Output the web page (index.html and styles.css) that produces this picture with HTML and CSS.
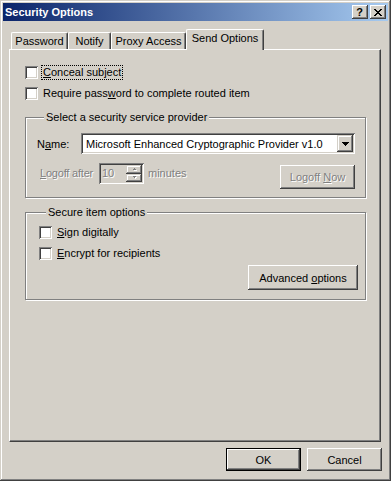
FILE: index.html
```html
<!DOCTYPE html>
<html lang="en">
<head>
  <meta charset="UTF-8" />
  <title>Security Options</title>
  <link rel="stylesheet" href="styles.css">
</head>
<body>
  <div class="window">
    <div class="titlebar">
      <span class="title">Security Options</span>
      <div class="caption-buttons">
        <span class="cap-btn help">?</span>
        <span class="cap-btn close">
          <svg width="8" height="7" viewBox="0 0 8 7" shape-rendering="crispEdges"><path d="M0 0h2v1H0zM6 0h2v1H6zM1 1h2v1H1zM5 1h2v1H5zM2 2h4v1H2zM3 3h2v1H3zM2 4h4v1H2zM1 5h2v1H1zM5 5h2v1H5zM0 6h2v1H0zM6 6h2v1H6z" fill="#000"/></svg>
        </span>
      </div>
    </div>

    <div class="client">
      <div class="tabs">
        <div class="tab tab-password">Password</div>
        <div class="tab tab-notify">Notify</div>
        <div class="tab tab-proxy">Proxy Access</div>
        <div class="tab tab-send active">Send Options</div>
      </div>

      <div class="panel">
        <div class="check">
          <span class="box"></span>
          <span class="check-text focused"><u>C</u>onceal subject</span>
        </div>
        <div class="check check-2">
          <span class="box"></span>
          <span class="check-text">Require pass<u>w</u>ord to complete routed item</span>
        </div>

        <div class="group group-provider">
          <div class="legend">Select a security service provider</div>
          <div class="name-row">
            <span class="name-label">N<u>a</u>me:</span>
            <div class="combo">
              <span class="combo-text">Microsoft Enhanced Cryptographic Provider v1.0</span>
              <span class="combo-btn">
                <svg width="7" height="4" viewBox="0 0 7 4" shape-rendering="crispEdges"><path d="M0 0h7v1H0zM1 1h5v1H1zM2 2h3v1H2zM3 3h1v1H3z" fill="#000"/></svg>
              </span>
            </div>
          </div>
          <div class="logoff-row">
            <span class="logoff-label disabled"><u>L</u>ogoff after</span>
            <div class="spin-edit">
              <span class="spin-value">10</span>
              <div class="spin">
                <span class="spin-btn">
                  <svg width="5" height="3" viewBox="0 0 5 3" shape-rendering="crispEdges"><path d="M2 0h1v1H2zM1 1h3v1H1z" fill="#808080"/></svg>
                </span>
                <span class="spin-btn">
                  <svg width="5" height="3" viewBox="0 0 5 3" shape-rendering="crispEdges"><path d="M1 0h3v1H1zM2 1h1v1H2z" fill="#808080"/></svg>
                </span>
              </div>
            </div>
            <span class="minutes disabled">minutes</span>
            <div class="btn btn-logoff disabled"><span>Logoff <u>N</u>ow</span></div>
          </div>
        </div>

        <div class="group group-secure">
          <div class="legend">Secure item options</div>
          <div class="check check-first">
            <span class="box"></span>
            <span class="check-text"><u>S</u>ign digitally</span>
          </div>
          <div class="check check-2">
            <span class="box"></span>
            <span class="check-text"><u>E</u>ncrypt for recipients</span>
          </div>
          <div class="advanced-row">
            <div class="btn btn-advanced"><span>Advanced <u>o</u>ptions</span></div>
          </div>
        </div>
      </div>

      <div class="buttons">
        <div class="btn btn-dialog default"><span>OK</span></div>
        <div class="btn btn-dialog"><span>Cancel</span></div>
      </div>
    </div>
  </div>
</body>
</html>
```

FILE: styles.css
```css
body {
  margin: 0;
  background: #d4d0c8;
  font-family: "Liberation Sans", Arial, sans-serif;
  font-size: 11px;
  color: #000;
}
u {
  text-decoration: underline;
  text-underline-offset: 1px;
}
.window {
  width: 391px;
  height: 481px;
  box-sizing: border-box;
  padding: 3px;
  background: #d4d0c8;
  box-shadow: inset -1px -1px #404040, inset 1px 1px #d4d0c8, inset -2px -2px #808080, inset 2px 2px #fff;
}
.titlebar {
  height: 18px;
  display: flex;
  align-items: center;
  padding: 0 2px;
  background: linear-gradient(to right, #0a246a, #a6caf0);
}
.title {
  flex: 1;
  color: #fff;
  font-weight: bold;
  font-size: 11px;
  line-height: 18px;
}
.caption-buttons {
  display: flex;
  gap: 2px;
}
.cap-btn {
  width: 16px;
  height: 14px;
  box-sizing: border-box;
  display: flex;
  align-items: center;
  justify-content: center;
  background: #d4d0c8;
  box-shadow: inset -1px -1px #404040, inset 1px 1px #fff, inset -2px -2px #808080;
}
.help {
  font-weight: bold;
  font-size: 11px;
  line-height: 14px;
  padding-right: 1px;
}
.close svg {
  display: block;
}

.client {
  padding: 0 6px;
}
.tabs {
  display: flex;
  align-items: flex-end;
  height: 28px;
  padding-left: 2px;
}
.tab {
  height: 17px;
  box-sizing: border-box;
  border-left: 1px solid #fff;
  border-top: 1px solid #fff;
  border-right: 1px solid #404040;
  border-radius: 2px 2px 0 0;
  box-shadow: inset -1px 0 #808080;
  background: #d4d0c8;
  text-align: center;
  line-height: 16px;
}
.tab-password { width: 57px; }
.tab-notify { width: 43px; }
.tab-proxy { width: 75px; }
.tab-send { width: 78px; }
.tab.active {
  height: 21px;
  margin-bottom: -1px;
  position: relative;
  z-index: 1;
  line-height: 17px;
}

.panel {
  width: 372px;
  height: 393px;
  box-sizing: border-box;
  border: 1px solid;
  border-color: #fff #404040 #404040 #fff;
  box-shadow: inset -1px -1px #808080;
  padding: 16px 0 0 15px;
}
.check {
  display: flex;
  align-items: center;
  height: 13px;
}
.check-2 {
  margin-top: 8px;
}
.box {
  width: 13px;
  height: 13px;
  box-sizing: border-box;
  background: #fff;
  box-shadow: inset 1px 1px #808080, inset -1px -1px #fff, inset 2px 2px #404040, inset -2px -2px #d4d0c8;
}
.check-text {
  margin-left: 4px;
  padding: 0 1px;
  line-height: 13px;
  white-space: nowrap;
}
.focused {
  outline: 1px dotted #000;
}

.group {
  width: 341px;
  box-sizing: border-box;
  border: 1px solid #808080;
  box-shadow: inset 1px 1px #fff, 1px 1px #fff;
}
.legend {
  width: fit-content;
  margin: -7px 0 0 7px;
  padding: 0 2px;
  line-height: 13px;
  background: #d4d0c8;
}
.group-provider {
  margin-top: 17px;
  padding: 0 10px 8px 11px;
}
.name-row {
  display: flex;
  align-items: center;
  margin-top: 9px;
}
.name-label {
  width: 44px;
}
.combo {
  width: 274px;
  height: 21px;
  box-sizing: border-box;
  padding: 2px;
  display: flex;
  align-items: center;
  background: #fff;
  box-shadow: inset 1px 1px #808080, inset -1px -1px #fff, inset 2px 2px #404040, inset -2px -2px #d4d0c8;
}
.combo-text {
  flex: 1;
  padding-left: 3px;
  white-space: nowrap;
}
.combo-btn {
  width: 16px;
  height: 17px;
  box-sizing: border-box;
  display: flex;
  align-items: center;
  justify-content: center;
  background: #d4d0c8;
  box-shadow: inset -1px -1px #404040, inset 1px 1px #d4d0c8, inset -2px -2px #808080, inset 2px 2px #fff;
}
.logoff-row {
  display: flex;
  align-items: flex-start;
  margin-top: 9px;
}
.disabled {
  color: #808080;
  text-shadow: 1px 1px 0 #fff;
}
.logoff-label {
  width: 59px;
  margin-left: 3px;
  line-height: 21px;
  white-space: nowrap;
  letter-spacing: -0.2px;
}
.spin-edit {
  width: 45px;
  height: 21px;
  box-sizing: border-box;
  padding: 2px;
  display: flex;
  background: #d4d0c8;
  box-shadow: inset 1px 1px #808080, inset -1px -1px #fff, inset 2px 2px #404040, inset -2px -2px #d4d0c8;
}
.spin-value {
  flex: 1;
  padding-left: 1px;
  line-height: 17px;
  color: #808080;
  text-shadow: 1px 1px 0 #fff;
}
.spin {
  width: 16px;
  display: flex;
  flex-direction: column;
}
.spin-btn {
  flex: 1;
  display: flex;
  align-items: center;
  justify-content: center;
  box-shadow: inset -1px -1px #404040, inset 1px 1px #d4d0c8, inset -2px -2px #808080, inset 2px 2px #fff;
}
.spin-btn svg {
  display: block;
  filter: drop-shadow(1px 1px 0 #fff);
}
.minutes {
  margin-left: 4px;
  line-height: 21px;
}

.btn {
  box-sizing: border-box;
  display: flex;
  align-items: center;
  justify-content: center;
  background: #d4d0c8;
  box-shadow: inset -1px -1px #404040, inset 1px 1px #fff, inset -2px -2px #808080;
  white-space: nowrap;
}
.btn-logoff {
  width: 75px;
  height: 24px;
  margin: 2px 0 0 auto;
}

.group-secure {
  margin-top: 14px;
  padding: 0 7px 9px 13px;
}
.check-first {
  margin-top: 7px;
}
.advanced-row {
  display: flex;
  justify-content: flex-end;
  margin-top: 5px;
}
.btn-advanced {
  width: 110px;
  height: 25px;
}

.buttons {
  display: flex;
  justify-content: flex-end;
  gap: 6px;
  margin-top: 6px;
}
.btn-dialog {
  width: 75px;
  height: 23px;
}
.btn.default {
  border: 1px solid #000;
}
```
